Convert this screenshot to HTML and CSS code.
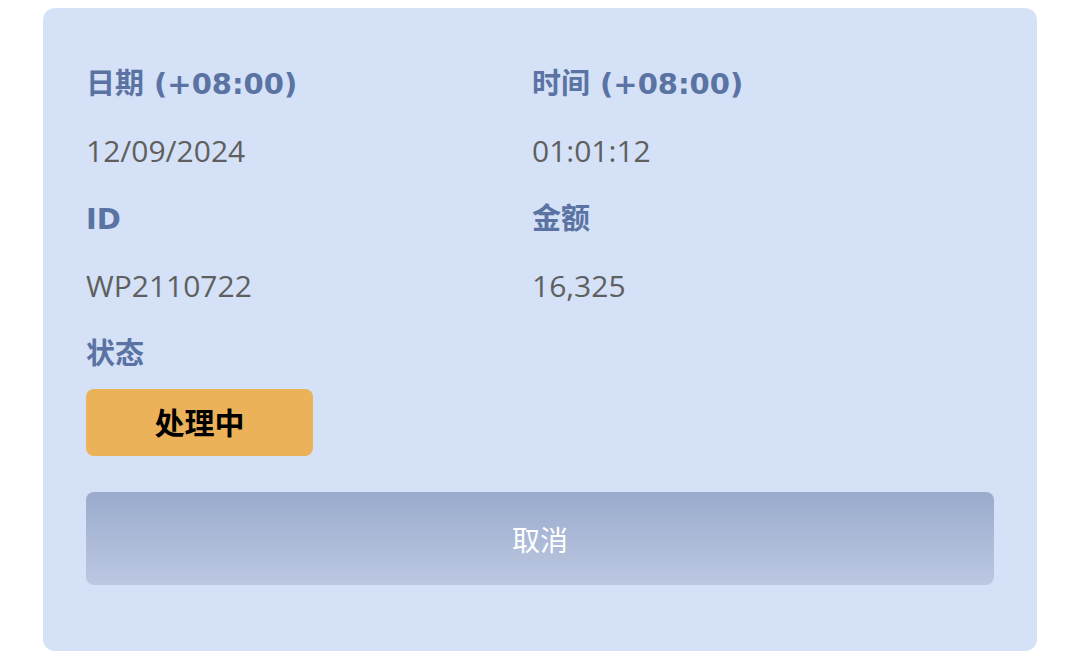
FILE: index.html
```html
<!doctype html>
<html lang="zh-CN">
	<head>
		<meta charset="UTF-8" />
		<meta name="viewport" content="width=device-width, initial-scale=1.0" />
		<title>交易详情</title>
		<link rel="stylesheet" href="styles.css">
	</head>
	<body>
		<div class="detail-card">
			<div class="detail-grid">
				<div class="field">
					<div class="label">日期 (+08:00)</div>
					<div class="value">12/09/2024</div>
				</div>
				<div class="field">
					<div class="label">时间 (+08:00)</div>
					<div class="value">01:01:12</div>
				</div>
				<div class="field">
					<div class="label">ID</div>
					<div class="value">WP2110722</div>
				</div>
				<div class="field">
					<div class="label">金额</div>
					<div class="value">16,325</div>
				</div>
				<div class="field">
					<div class="label">状态</div>
					<span class="status">处理中</span>
				</div>
			</div>
			<button class="cancel-btn">取消</button>
		</div>
	</body>
</html>
```

FILE: styles.css
```css
body {
	margin: 0;
	padding: 8px 43px 14px 43px;
	background: #ffffff;
	font-family: "DejaVu Sans", "Noto Sans CJK SC", sans-serif;
}
.detail-card {
	background: #d4e1f6;
	border-radius: 12px;
	padding: 56px 43px 66px 43px;
}
.detail-grid {
	display: grid;
	grid-template-columns: 446px 1fr;
}
.field {
	display: flex;
	flex-direction: column;
}
.label {
	color: #5a73a3;
	font-size: 29px;
	font-weight: 700;
	line-height: 40px;
	margin-bottom: 27px;
}
.value {
	color: #5f5f5f;
	font-family: "Open Sans", "Noto Sans CJK SC", sans-serif;
	font-size: 30px;
	line-height: 40px;
	margin-bottom: 28px;
}
.status {
	display: flex;
	align-items: center;
	justify-content: center;
	box-sizing: border-box;
	width: 227px;
	height: 67px;
	margin-top: -12px;
	padding-bottom: 4px;
	background: #ecb25a;
	border-radius: 8px;
	color: #000000;
	font-family: "Noto Sans CJK SC", sans-serif;
	font-size: 30px;
	font-weight: 700;
}
.cancel-btn {
	display: block;
	width: 100%;
	height: 93px;
	margin-top: 36px;
	border: none;
	border-radius: 8px;
	background: linear-gradient(#9aabcc, #bcc8e2);
	color: #ffffff;
	font-family: "Noto Sans CJK SC", sans-serif;
	font-size: 28px;
	cursor: pointer;
}
```
